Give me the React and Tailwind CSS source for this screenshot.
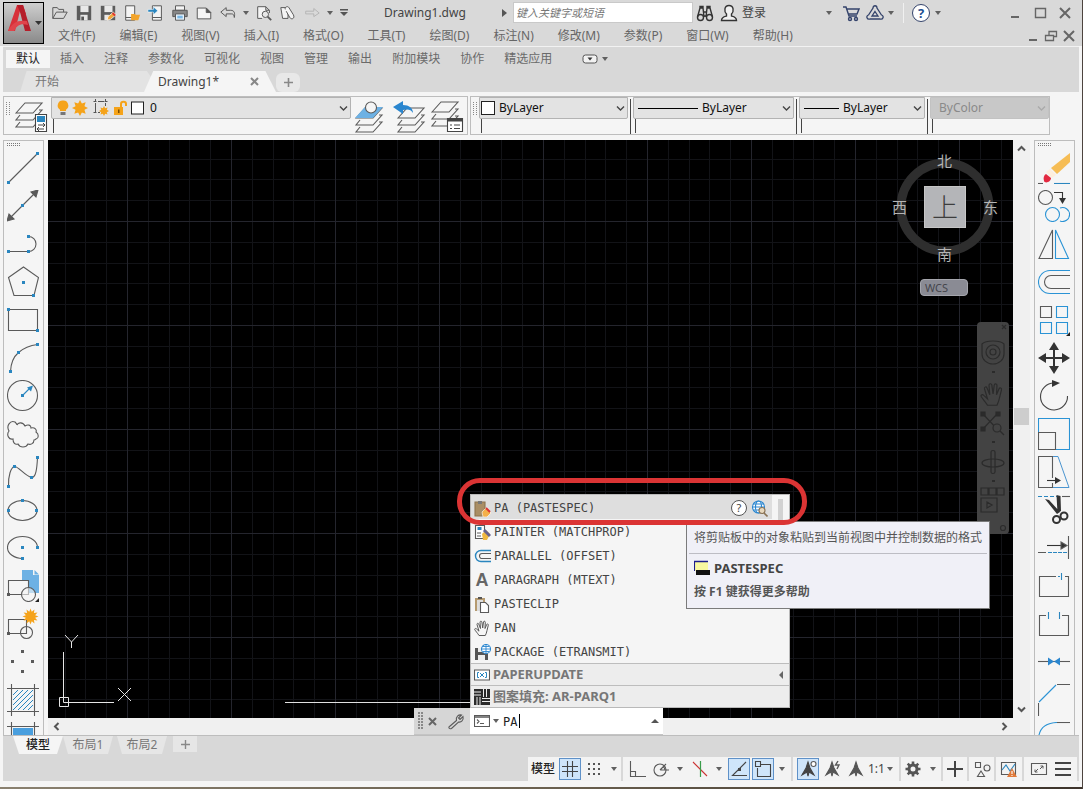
import React from 'react';

const G = '#5a5a5a';
const B = '#2a86bf';

/* ---------- small helpers ---------- */

const Svg = ({ size = 20, box = size, children, className = '' }) => (
  <svg width={size} height={size} viewBox={`0 0 ${box} ${box}`} fill="none" stroke={G} strokeWidth="1.1" className={`shrink-0 ${className}`} aria-hidden="true">
    {children}
  </svg>
);

// little square grip used all over the draw icons
const Dots = ({ at, color = B, s = 3 }) =>
  at.map(([x, y]) => <rect key={`${x}-${y}`} x={x - s / 2} y={y - s / 2} width={s} height={s} fill={color} stroke="none" />);

const Caret = ({ className = '' }) => (
  <svg width="6" height="4" viewBox="0 0 6 4" className={`shrink-0 ${className}`} aria-hidden="true">
    <path d="M0 0h6L3 4z" fill="#606060" />
  </svg>
);

const Chevron = ({ className = '', color = '#555', w = 1.4 }) => (
  <svg width="9" height="9" viewBox="0 0 9 9" className={`shrink-0 ${className}`} fill="none" stroke={color} strokeWidth={w} aria-hidden="true">
    <path d="M1 2.5l3.5 3.5L8 2.5" />
  </svg>
);

const Sun = ({ cx, cy, r, spikes = 8 }) => {
  const pts = Array.from({ length: spikes * 2 }, (_, i) => {
    const a = (i * Math.PI) / spikes;
    const d = i % 2 ? r * 0.6 : r;
    return `${cx + d * Math.cos(a)},${cy + d * Math.sin(a)}`;
  }).join(' ');
  return <polygon points={pts} fill="#f5a31a" stroke="none" />;
};

const handPath =
  'M5 15.5C3.5 13 1.5 11 .8 9.7c-.5-1 .8-1.7 1.7-.8L5 11.200 3 4.5c-.3-1.200 1.300-1.700 1.700-.5L6.5 8.5 6 2.200C6 .9 7.700.8 7.900 2.100L8.700 8 9.5 2c.2-1.200 1.900-1 1.800.3L11 8.5l1.700-4c.5-1.100 2-.5 1.600.7L13 10.5c-.3 2-1 3.5-1.700 5z';

/* ---------- title bar ---------- */

const quickTools = [
  ['打开', <><path d="M2 16V4h5l1.5 2H14v3M2 16L6 9h12l-4 7z" /></>],
  ['保存', <><path d="M2 2h16v16H2z" fill="#5c5c5c" stroke="none" /><path d="M6 2h9v7H6z" fill="#e8e8e8" stroke="none" /><path d="M6 12h8v6H6z" fill="#e8e8e8" stroke="none" /><path d="M7 14h3v4H7z" fill="#555" stroke="none" /></>],
  ['另存为', <><path d="M2 2h16v16H2z" fill="#5c5c5c" stroke="none" /><path d="M6 2h9v7H6z" fill="#e8e8e8" stroke="none" /><path d="M6 12h5v6H6z" fill="#e8e8e8" stroke="none" /><path d="M9 18l1-4 6-5 3 3-6 5z" fill="#f0a73c" stroke="#fff" strokeWidth=".8" /><path d="M15 10l3 3" stroke="#d33" strokeWidth="2" /></>],
  ['从 Web 打开', <><path d="M3 2h10v16H3z" fill="#f4f4f4" /><path d="M3 15h7" /><path d="M9 18v-7h4l1 1h5l-2 6z" fill="#f2a42c" stroke="none" /></>],
  ['保存到 Web', <><path d="M6 2h10v16H6z" fill="#f4f4f4" /><path d="M6 15h10" /><path d="M1 6h6V3l5 4.5L7 12V9H1z" fill={B} stroke="#fff" strokeWidth=".6" /></>],
  ['打印', <><path d="M5 2h10v5H5z" fill="#f4f4f4" /><path d="M2 7h16v7H2z" fill="#888" /><path d="M5 11h10v7H5z" fill="#e6f2fb" /><path d="M7 13h6v3H7z" fill="#7ab8e6" stroke="none" /></>],
  ['新建', <><path d="M2.5 4.500h10l5 5v7h-15z" fill="#f4f4f4" /><path d="M12.5 4.500v5h5z" fill="#555" /></>],
  ['放弃', <path d="M8 4L2 9l6 5v-3h6c2 0 3 1.5 3 4 1-5 0-8-4-8H8z" />],
  ['预览', <><path d="M8 16H3V3h9l4 4v3M12 3v4h4" fill="#f4f4f4" /><circle cx="11.5" cy="11.5" r="3.5" fill="#e8e8e8" /><path d="M14 14l4 4" strokeWidth="2" /></>],
  ['附着', <><path d="M2 4h8v12H4z" fill="#f4f4f4" /><path d="M7 6c-1-3 3-4 4-2l5 8c2 4-2 6-4 3L8 8" fill="#f4f4f4" /></>],
  ['重做', <path d="M12 5l6 5-6 4v-3H3V8h9z" stroke="#b5b5b5" />],
];

const QuickButton = ({ item }) => (
  <button type="button" aria-label={item[0]} className="w-6 h-6 flex items-center justify-center">
    <Svg size={18} box={20}>{item[1]}</Svg>
  </button>
);

const CaretButton = ({ label, className = 'w-3' }) => (
  <button type="button" aria-label={label} className={`h-6 flex items-center justify-center ${className}`}>
    <Caret />
  </button>
);

const TitleBar = () => (
  <div className="flex h-[25px] items-center">
    <div className="flex items-center ml-1">
      {quickTools.slice(0, 8).map((t) => <QuickButton key={t[0]} item={t} />)}
      <CaretButton label="放弃列表" />
      {quickTools.slice(8).map((t) => <QuickButton key={t[0]} item={t} />)}
      <CaretButton label="重做列表" />
      <button type="button" aria-label="自定义快速访问工具栏" className="w-4 h-6 flex items-center justify-center">
        <svg width="8" height="7" viewBox="0 0 8 7" aria-hidden="true"><path d="M0 0h8v1.5H0zM0 3h8L4 7z" fill="#555" /></svg>
      </button>
    </div>
    <h1 className="ml-8 w-[114px] text-xs text-[#444]">Drawing1.dwg</h1>
    <svg width="5" height="8" viewBox="0 0 5 8" className="mr-1.5 ml-1" aria-hidden="true"><path d="M0 0l5 4-5 4z" fill="#555" /></svg>
    <input
      type="text"
      aria-label="搜索"
      placeholder="键入关键字或短语"
      className="w-[180px] h-[21px] bg-white border border-[#c9c9c9] px-0.5 text-[11px] italic placeholder:text-[#777] outline-none"
    />
    <button type="button" aria-label="查找" className="w-6 h-6 flex items-center justify-center">
      <Svg size={18}>
        <g stroke="#333" strokeWidth="1.4"><circle cx="4.5" cy="13.5" r="3" /><circle cx="13.5" cy="13.5" r="3" /><path d="M1.5 13L4 4h3l1 9M16.5 13L14 4h-3l-1 9M8 8h2M8 12h2M4 4V2.5h3V4M11 4V2.5h3V4" /></g>
      </Svg>
    </button>
    <button type="button" className="h-6 flex items-center gap-1 pl-[3px] w-[104px] text-xs text-[#444]">
      <Svg size={18}><path d="M9 1.5c5 0 5 6 2.5 8.5v2c2 .5 5 1 5 4.5h-15C1.5 13 4.5 12.5 6.5 12v-2C4 7.5 4 1.5 9 1.5z" stroke="#333" fill="#f0f0f0" strokeWidth="1.4" /></Svg>
      登录
    </button>
    <CaretButton label="登录选项" className="w-4" />
    <button type="button" aria-label="Autodesk App Store" className="w-6 h-6 ml-0.5 flex items-center justify-center">
      <Svg size={18}><g stroke="#34436b" strokeWidth="1.4"><path d="M1 3h3l3 9h8M5 5h12l-2 5H6.5" /><circle cx="8" cy="15" r="1.5" /><circle cx="14" cy="15" r="1.5" /></g></Svg>
    </button>
    <button type="button" aria-label="连接" className="w-6 h-6 flex items-center justify-center">
      <Svg size={18}><g stroke="#34436b" strokeWidth="1.3"><path d="M7 4c0-3 4-3 4 0l4.5 7c3 1 1.5 5-1.5 4H4c-3 1-4.5-3-1.5-4zM9 7.5l3 4.5H6z" /></g></Svg>
    </button>
    <CaretButton label="连接选项" className="w-2" />
    <span className="w-px h-5 bg-[#f0f0f0] mx-2" />
    <button type="button" aria-label="帮助" className="w-[18px] h-[18px] rounded-full border border-[#34436b] bg-white text-[13px] leading-4 font-bold text-[#1d4f91]">?</button>
    <CaretButton label="帮助选项" className="w-4" />
    <div className="ml-auto flex items-center gap-[7px] mr-2">
      {[
        ['最小化', 'M5 13h8', 2],
        ['最大化', 'M4.5 4.5h10v9h-10z', 1.4],
        ['关闭', 'M4 4l10 10M14 4L4 14', 2],
      ].map(([l, d, w]) => (
        <button key={l} type="button" aria-label={l}><Svg size={18}><path d={d} strokeWidth={w} stroke="#666" /></Svg></button>
      ))}
    </div>
  </div>
);

const menus = ['文件(F)', '编辑(E)', '视图(V)', '插入(I)', '格式(O)', '工具(T)', '绘图(D)', '标注(N)', '修改(M)', '参数(P)', '窗口(W)', '帮助(H)'];

const MenuBar = () => (
  <div className="flex h-[21px] items-center pl-[14px]">
    <nav className="flex gap-6 text-xs leading-4 text-[#666]">
      {menus.map((m) => <button key={m} type="button" className="whitespace-nowrap">{m}</button>)}
    </nav>
    <div className="ml-auto flex items-center mr-1">
      {[
        ['最小化图形', 'M5 13h8', 2],
        ['还原图形', 'M3.5 8.5h8v5h-8zM7 8V4.500h7.500v5H12', 1.3],
        ['关闭图形', 'M4 4l10 10M14 4L4 14', 2],
      ].map(([l, d, w]) => (
        <button key={l} type="button" aria-label={l}><Svg size={18}><path d={d} strokeWidth={w} stroke="#666" /></Svg></button>
      ))}
    </div>
  </div>
);

/* ---------- ribbon + file tabs ---------- */

const ribbon = ['默认', '插入', '注释', '参数化', '可视化', '视图', '管理', '输出', '附加模块', '协作', '精选应用'];

const Ribbon = () => (
  <div className="mx-[3px] bg-[#d8d8d8] border-t border-[#f2f2f2]">
    <div className="flex items-center h-6 pl-[3px] text-xs leading-4">
      {ribbon.map((r, i) => (
        <button key={r} type="button" className={`px-2.5 h-[18px] whitespace-nowrap ${i === 0 ? 'bg-[#f5f5f5] text-[#222]' : 'text-[#6a6a6a]'}`}>{r}</button>
      ))}
      <button type="button" aria-label="最小化功能区" className="ml-5 flex items-center gap-1">
        <svg width="16" height="10" viewBox="0 0 16 10" aria-hidden="true"><rect x="1" y="1" width="14" height="8" rx="2.5" fill="#f2f2f2" stroke="#555" /><path d="M5.5 3.5h5L8 6.5z" fill="#333" /></svg>
        <Caret />
      </button>
    </div>
    <div className="flex items-end h-[21px] pl-[17px] text-xs">
      <button type="button" className="h-[21px] w-[132px] pl-[15px] text-left text-[#777] bg-[#e3e3e3] [clip-path:polygon(5%_0,96%_0,100%_35%,96%_100%,0_100%)]">开始</button>
      <div className="-ml-2 h-[21px] w-[132px] flex items-center bg-[#f5f5f5] [clip-path:polygon(7%_0,92%_0,100%_100%,0_100%)]">
        <button type="button" className="pl-[14px] text-[#444]">Drawing1*</button>
        <button type="button" aria-label="关闭选项卡" className="ml-[31px]"><Svg size={9}><path d="M1 1l7 7M8 1L1 8" stroke="#888" strokeWidth="2" /></Svg></button>
      </div>
      <button type="button" aria-label="新图形" className="h-[19px] w-6 flex items-center justify-center bg-[#e8e8e8] rounded-md"><Svg size={9}><path d="M4.5 0v9M0 4.500h9" stroke="#888" strokeWidth="1.6" /></Svg></button>
    </div>
  </div>
);

/* ---------- layer / properties toolbar ---------- */

const Grip = () => (
  <svg width="4" height="14" viewBox="0 0 4 14" className="mt-[5px] mx-0.5 shrink-0" aria-hidden="true">
    {[0, 2, 4, 6, 8, 10, 12].map((y) => <path key={y} d={`M0 ${y}h1v1H0zM3 ${y}h1v1H3z`} fill="#888" />)}
  </svg>
);

const sheets = (dx, dy) => (
  <g transform={`translate(${dx} ${dy})`}>
    <path d="M1 11L10 1h17l-9 10z" fill="#f5f5f5" />
    <path d="M5 13l-4 5h17l9-10h-3M5 20l-4 5h17l9-10h-3" />
  </g>
);

const Combo = ({ label, value, className, lead, disabled }) => (
  <div className={`flex flex-col ${className}`}>
    <div className={`relative flex items-center h-[22px] border pl-1 rounded-b-xs ${disabled ? 'bg-[#c8c8c8] border-[#c2c2c2]' : 'bg-[#e3e3e3] border-[#b3b3b3]'}`}>
      {lead}
      <select aria-label={label} disabled={disabled} defaultValue={value} className={`appearance-none flex-1 min-w-0 h-5 pl-1 bg-transparent text-xs outline-none ${disabled ? 'text-[#8a8a8a]' : 'text-[#111]'}`}>
        <option>{value}</option>
      </select>
      <Chevron className="absolute right-0.5 pointer-events-none" color={disabled ? '#aaa' : '#444'} />
    </div>
    <div className="ml-0.5 h-[14px] border-l border-[#444]" />
  </div>
);

const Bar = () => <div className="w-px h-[35px] mt-0.5 mx-0.5 bg-[#444] shrink-0" />;

const Toolbars = () => (
  <div className="flex gap-0.5 pl-[3px] mt-1 h-[39px]">
    <div className="flex border border-[#bdbdbd] w-[465px]">
      <Grip />
      <button type="button" aria-label="图层特性" className="ml-[3px] mr-0.5">
        <Svg size={34}>
          {sheets(0, 3)}
          <path d="M20.5 15.5h11v17h-11z" fill="#fff" stroke="#444" /><path d="M22 17h8v6h-8z" fill={B} stroke="none" />
          <path d="M23 26h7m-2-2l2 2-2 2M29 30h-7m2-2l-2 2 2 2" stroke="#444" strokeWidth="1" />
        </Svg>
      </button>
      <Combo
        label="图层"
        value="0"
        className="w-[300px]"
        lead={
          <svg width="90" height="18" viewBox="0 0 90 18" aria-hidden="true">
            <path d="M7 1.5a5 5 0 0 1 3 9.200V12H4v-1.300A5 5 0 0 1 7 1.5z" fill="#f5a31a" /><path d="M4.5 13h5v3h-5z" fill="#777" />
            <Sun cx={24} cy={9} r={8} /><circle cx="24" cy="9" r="4.500" fill="#f5a31a" />
            <g fill="none" stroke="#555"><path d="M39.5 4v9M42 2.500h6M49.5 4v3M42 13.500h2" /><path d="M37.5 2.500h3M48.5 2.500h3M37.5 13.500h3M39.5 0v3M49.5 0v3" /></g>
            <Sun cx={48} cy={12} r={5} />
            <path d="M58 8h9v8h-9z" fill="#f5a31a" /><path d="M65 8V5c0-3 5-3 5 0v2" fill="none" stroke="#f5a31a" strokeWidth="2" /><path d="M62 10.5h1.500V14H62z" fill="#7a4d00" />
            <rect x="75.5" y="3" width="12" height="12" fill="#fff" stroke="#222" />
          </svg>
        }
      />
      <button type="button" aria-label="将对象的图层置为当前" className="ml-0.5">
        <Svg size={34}>{sheets(2, 8)}<path d="M2 19l10-11h18l-10 11z" fill="#6db1e4" stroke="none" /><circle cx="18" cy="8.500" r="5.500" fill="#f5f5f5" /></Svg>
      </button>
      <button type="button" aria-label="上一个图层" className="ml-1.5">
        <Svg size={34}>{sheets(4, 8)}<path d="M0 8l10-6v4c6 0 10 3 10 8-2-4-6-4-10-3v4z" fill="#2a86cf" stroke="none" /></Svg>
      </button>
      <button type="button" aria-label="图层状态管理器" className="ml-1">
        <Svg size={34}>{sheets(0, 2)}<path d="M16.5 19.5h15v13h-15z" fill="#fff" stroke="#444" /><path d="M16.5 21h15" strokeWidth="3" stroke="#444" /><path d="M19 26h2m2 0h6M19 29.500h2m2 0h6" stroke="#444" /></Svg>
      </button>
    </div>
    <div className="flex border border-[#bdbdbd]">
      <Grip />
      <Combo label="颜色" value="ByLayer" className="w-[149px]" lead={<span className="w-[14px] h-[14px] ml-[-3px] bg-white border border-[#222]" />} />
      <Bar />
      <Combo label="线型" value="ByLayer" className="w-[161px]" lead={<span className="w-[60px] h-px bg-black" />} />
      <Bar />
      <Combo label="线宽" value="ByLayer" className="w-[126px]" lead={<span className="w-[35px] h-px bg-black" />} />
      <Bar />
      <Combo label="打印样式" value="ByColor" className="w-[119px]" disabled />
    </div>
  </div>
);

/* ---------- side toolbars, every icon is drawn on a 32px board ---------- */

const drawTools = [
  ['直线', <><path d="M1.5 30.5l29-29" /><Dots at={[[1.5, 30.5], [30.5, 1.5]]} /></>],
  ['构造线', <><path d="M3 28L28 3" /><path d="M0 31l2-7 5 5zM31 0l-7 2 5 5z" fill={G} /><Dots at={[[15.5, 15.5]]} /></>],
  ['多段线', <><path d="M1.5 23.5h20a7.5 7.5 0 0 0 0-15" /><Dots at={[[1.5, 23.5], [21.5, 23.5], [21.5, 8.5]]} /></>],
  ['多边形', <><path d="M16.5 1l15 10.5-4.5 18H7l-5.5-18z" /><Dots at={[[16.5, 16.5], [26.5, 29.5]]} /></>],
  ['矩形', <><path d="M1.5 5.5h29v21h-29z" /><Dots at={[[1.5, 5.5], [30.5, 26.5]]} /></>],
  ['圆弧', <><path d="M3.5 29.5Q4 17 11.5 10.5T30.5 2.500" /><Dots at={[[3.5, 29.5], [11.5, 10.5], [30.5, 2.5]]} /></>],
  ['圆', <><circle cx="15.5" cy="15.5" r="15" /><path d="M15.5 15.5l7-7" stroke={B} /><path d="M26 5.5l-6 2 4 4z" fill={B} stroke="none" /><Dots at={[[15.5, 15.5]]} /></>],
  ['修订云线', <path d="M2 13C-1 8 3 2 8 4c1 1 2 2 2 3 1-3 6-3 8 1 3-2 6-1 6 2 4-1 6 2 5 4 3 2 3 6 0 7-1 1-1 1-2 1 0 4-4 5-6 4-2 4-8 4-10 0-3 1-5-1-5-5-4 1-7-4-4-8z" />],
  ['样条曲线', <><path d="M1.5 30.5C1 20 4 11 7.5 10.5S18 20 24.5 21.500C29 22 30 12 30.5 1.500" /><Dots at={[[1.5, 30.5], [7.5, 10.5], [24.5, 21.5], [30.5, 1.5]]} /></>],
  ['椭圆', <><ellipse cx="15.5" cy="16.5" rx="14.5" ry="10" /><Dots at={[[1.5, 16.5], [15.5, 6.5], [29.5, 16.5]]} /></>],
  ['椭圆弧', <><path d="M30.5 15.5A15 11 0 1 0 15.5 26.500" /><Dots at={[[15.5, 15.5], [30.5, 15.5], [15.5, 26.5]]} /></>],
  ['插入块', <><path d="M15 0h11v5h6v18H15z" fill="#6db1e4" stroke="none" /><path d="M27.5 0L32 4.500h-4.500z" fill="#6db1e4" stroke="none" /><path d="M1.5 10.5h20v14h-20z" fill="#f5f5f5" /><circle cx="21.5" cy="24.5" r="7" fill="#f5f5f5" fillOpacity=".6" /><Dots at={[[1.5, 24.5]]} color={G} /><path d="M32 28v4h-4z" fill="#222" stroke="none" /></>],
  ['创建块', <><path d="M1.5 11.5h18v14h-18z" /><circle cx="19.5" cy="24.5" r="6" /><Sun cx={23.5} cy={8.5} r={8} spikes={12} /><Dots at={[[1.5, 25.5]]} color={G} /></>],
  ['多点', <Dots at={[[15.5, 5.5], [5.5, 15.5], [25.5, 15.5], [15.5, 25.5]]} color={G} />],
  ['图案填充', <><path d="M4.5 0v32M27.5 0v32M0 4.500h32M0 27.500h32" /><path d="M6 11l5-5M6 16L16 6M6 21L21 6M6 26L26 6M11 26l15-15M16 26l10-10M21 26l5-5" stroke={B} strokeWidth="1" /></>],
  ['渐变色', <><path d="M4.5 0v32M27.5 0v32M0 4.500h32" /><path d="M6 6h20v26H6z" fill="#4a9fde" stroke="none" /></>],
];

const modifyTools = [
  ['删除', <><path d="M32 1v9L19 22l-6-6z" fill="#f6bd55" stroke="none" /><path d="M12 17l6 6-4 3-6-6z" fill="#fdeedd" stroke="none" /><path d="M8 22l5 4c0 4-6 6-7 3-1-3 0-6 2-7z" fill="#e32940" stroke="none" /><path d="M0 31.500h5" /><path d="M16 31.500h16" stroke={B} /></>],
  ['复制', <><circle cx="7.5" cy="7.5" r="7" /><path d="M16 2.5h8.500V9" stroke="#333" /><path d="M21 8h7l-3.500 6z" fill="#333" stroke="none" /><circle cx="14.5" cy="24.5" r="7" stroke="#2a93d5" /><path d="M22 18a7 7 0 1 1 0 13" stroke="#2a93d5" /></>],
  ['镜像', <><path d="M14.5 2v28.500H1z" /><path d="M17.5 2v28.500h13z" stroke="#2a93d5" /></>],
  ['偏移', <><path d="M32 4.5H12a11.5 11.5 0 0 0 0 23h20" stroke="#2a93d5" /><path d="M32 9.5H13a6.5 6.5 0 0 0 0 13h19" /></>],
  ['阵列', <><path d="M2.5 2.5h11v11h-11z" /><path d="M18.5 2.5h11v11h-11zM2.5 18.5h11v11h-11zM18.5 18.5h11v11h-11z" stroke="#2a93d5" /><path d="M32 28v4h-4z" fill="#222" stroke="none" /></>],
  ['移动', <><path d="M16 4v24M4 16h24" stroke="#333" strokeWidth="2" /><path d="M16 0l5 8H11zM16 32l5-8H11zM0 16l8-5v10zM32 16l-8-5v10z" fill="#333" stroke="none" /></>],
  ['旋转', <><path d="M16 3A13.5 13.5 0 1 0 29.5 16" stroke="#444" /><path d="M14 0l8 3-8 4z" fill="#333" stroke="none" /></>],
  ['缩放', <><path d="M.5 14V.5h31v31H18" stroke="#2a93d5" /><path d="M.5 14.5h17v17H.5z" /></>],
  ['拉伸', <><path d="M14.5 22V.5H.5v31h14V27" /><path d="M15 .5h5l11 31H15" stroke="#4a94cf" strokeWidth="1" /><path d="M9 24.500h9" stroke="#333" /><path d="M17 21l6 3.500-6 3.500z" fill="#333" stroke="none" /></>],
  ['修剪', <><path d="M0 2.500h20" stroke={B} strokeDasharray="4 2" /><path d="M24 2.500h8" /><path d="M18.500 1l4 1 .5 15-3.500 2zM7 5l4 1 11 12-3 2z" fill="#333" stroke="none" /><circle cx="18.500" cy="25.500" r="3.500" stroke="#333" strokeWidth="2" /><circle cx="26" cy="22" r="3.500" stroke="#333" strokeWidth="2" /></>],
  ['延伸', <><path d="M9 13.500h16" stroke="#333" /><path d="M23 10l6 3.500-6 3.500z" fill="#333" /><path d="M30.5 4v23M0 20.500h8" /><path d="M10 20.500h20" stroke={B} strokeDasharray="4 1" /></>],
  ['打断于点', <><path d="M18 6.5H1.5v20h29v-20H27" /><path d="M23.5 3v7M20 6.500h2" stroke={B} /></>],
  ['打断', <><path d="M8 7.5H1.5v20h29v-20H24" /><path d="M10.5 4v7M21.5 4v7" stroke={B} /></>],
  ['合并', <><path d="M0 15.500h32" /><path d="M10 11.5l6 4-6 4zM22 11.5l-6 4 6 4z" fill="#2a86cf" stroke="none" /></>],
  ['倒角', <><path d="M.5 32V19M19 .5h13" /><path d="M1 18L18 1" stroke="#2a93d5" /></>],
  ['圆角', <><path d="M19 .5h13" /><path d="M.5 16Q2 1 19 .5" stroke="#2a93d5" /></>],
];

const SideBar = ({ tools, label }) => (
  <div role="toolbar" aria-label={label} className="w-[41px] shrink-0 border-x border-t border-[#bdbdbd] bg-[#f5f5f5] overflow-hidden pl-[3px]">
    <svg width="14" height="4" viewBox="0 0 14 4" className="mt-0.5 mb-0.5" aria-hidden="true">
      {[0, 2, 4, 6, 8, 10, 12].map((x) => <path key={x} d={`M${x} 0h1v1h-1zM${x} 2h1v1h-1z`} fill="#777" />)}
    </svg>
    <div className="h-full overflow-hidden">
      {tools.map(([name, icon]) => (
        <button key={name} type="button" aria-label={name} className="h-[38px] flex items-center">
          <Svg size={32}>{icon}</Svg>
        </button>
      ))}
    </div>
  </div>
);

/* ---------- drawing area ---------- */

const minor = [21, 42, 62, 83];

const Canvas = () => (
  <div className="relative flex-1 min-w-0 bg-black overflow-hidden">
    <svg className="absolute inset-0 w-full h-full" aria-hidden="true">
      <defs>
        <pattern id="grid" x="79" y="81" width="104" height="104" patternUnits="userSpaceOnUse">
          {minor.map((m) => <path key={m} d={`M${m} 0h1v104h-1zM0 ${m}h104v1H0z`} fill="#121317" />)}
          <path d="M0 0h1v104H0zM0 0h104v1H0z" fill="#24252d" />
        </pattern>
      </defs>
      <rect width="100%" height="100%" fill="url(#grid)" />
      <path d="M237 562.500h190" stroke="#e0e0e0" />
    </svg>

    {/* UCS icon */}
    <svg width="80" height="80" viewBox="0 0 80 80" className="absolute left-2.5 bottom-1.5" fill="none" stroke="#e6e6e6" aria-hidden="true">
      <path d="M5.5 20v50.500H56" /><path d="M1.5 65.5h9v9h-9z" />
      <path d="M7 3l6.500 7L20 3M13.500 10v6M60 56l13 13M73 56L60 69" />
    </svg>

    {/* view cube */}
    <div className="absolute right-[13px] top-3 w-[110px] h-[110px] grid place-items-center text-[15px] leading-none text-[#b4b4b4]">
      <svg width="98" height="98" viewBox="0 0 98 98" className="absolute left-[6px] top-[6px]" aria-hidden="true">
        <circle cx="49" cy="49" r="44" fill="none" stroke="#2e2e2e" strokeWidth="9" />
      </svg>
      <button type="button" className="absolute left-[47px] top-[2px]">北</button>
      <button type="button" className="absolute left-[2px] top-[48px]">西</button>
      <button type="button" className="absolute right-[2px] top-[48px]">东</button>
      <button type="button" className="absolute left-[47px] bottom-0">南</button>
      <button type="button" className="relative w-[42px] h-[42px] bg-[#b4b5b8] border border-[#c6c6c6] font-light text-[26px] leading-none text-[#3d3d3d]">上</button>
    </div>
    <button type="button" className="absolute right-[45px] top-[139px] w-12 h-[17px] rounded-sm border border-[#a5a6ad] bg-[#8a8b94] pl-1 text-left text-[11px] leading-[14px] text-[#44454c]">
      WCS
    </button>

    {/* navigation bar */}
    <div className="absolute right-1 top-[182px] w-8 h-[212px] rounded-sm bg-[#434343]">
      <svg width="32" height="212" viewBox="0 0 32 212" fill="none" stroke="#2b2b2b" strokeWidth="1.2" aria-hidden="true">
        <path d="M25 3l4 4M29 3l-4 4" />
        <path d="M5 22c4-4 18-4 22 0v10a11 10 0 0 1-22 0z" /><circle cx="16" cy="30" r="7" /><circle cx="16" cy="30" r="3" />
        <g transform="translate(3 60) scale(1.5)"><path d={handPath} strokeWidth=".8" /></g>
        <path d="M5 91l16 17M21 91L5 108" /><path d="M4 90h4v4H4zM19 90h4v4h-4zM4 105h4v4H4z" fill="#2b2b2b" /><circle cx="20" cy="106" r="4" fill="#434343" /><path d="M23 109l4 4" />
        <ellipse cx="16" cy="141" rx="11" ry="4" /><path d="M14 130v20c0 2 4 2 4 0v-20c0-2-4-2-4 0z" />
        <path d="M4 166h7v7H4zM12 166h7v7h-7zM20 166h7v7h-7zM4 176h16v14H4zM10 180l5 3-5 3z" />
        <path d="M15 50h3M15 120h3M15 159h3" strokeWidth="2" />
        <circle cx="26" cy="206" r="2.5" />
      </svg>
    </div>
  </div>
);

/* ---------- command line ---------- */

const suggestions = [
  ['PA (PASTESPEC)', <><path d="M1 2h10v14H1z" fill="#a98e65" stroke="#8d744f" /><path d="M4 1h4v3H4z" fill="#777" stroke="none" /><path d="M8 12l4-4 5 5-4 4H9z" fill="#f4b04a" stroke="#fff" strokeWidth=".6" /><path d="M12 8l4 4" stroke="#d33" strokeWidth="2" /></>],
  ['PAINTER (MATCHPROP)', <><path d="M1.5 1.5h9v13h-9z" fill="#fff" /><path d="M3.5 3h4v3h-4z" fill={B} stroke="none" /><path d="M3 9h4M3 12h4" /><path d="M8 10l4-4 4 4-3 6H9z" fill="#f0b840" stroke="none" /><path d="M10 6l6 6" stroke="#67628f" strokeWidth="3" /></>],
  ['PARALLEL (OFFSET)', <><path d="M17 2.5H7a5.5 5.5 0 0 0 0 11h10" stroke="#2a86bf" strokeWidth="1.4" /><path d="M17 5.5H8a2.5 2.5 0 0 0 0 5h9" /></>],
  ['PARAGRAPH (MTEXT)', null],
  ['PASTECLIP', <><path d="M1 2h10v13H1z" fill="#b59a70" stroke="none" /><path d="M3 4h6v11H3z" fill="#ddd" stroke="none" /><path d="M4 1h4v2H4z" fill="#555" stroke="none" /><path d="M6.5 6.5h5l3 3v7h-8z" fill="#fff" /></>],
  ['PAN', <path d={handPath} strokeWidth="1" />],
  ['PACKAGE (ETRANSMIT)', <><path d="M1 4h13v12H1z" fill="#555" stroke="none" /><path d="M4 4h5v4H4zM4 11h7v5H4z" fill="#eee" stroke="none" /><circle cx="12" cy="5" r="4.5" fill="#fff" stroke="#2a86cf" /><path d="M12 .5v9M7.5 5h9M9 2.500h6M9 7.500h6" stroke="#2a86cf" strokeWidth=".9" /></>],
];

const SuggestionList = () => (
  <div className="relative ml-14 w-80 border border-[#b9b9b9] bg-[#f5f5f5]">
    <ul className="font-['DejaVu_Sans_Mono',monospace] text-xs text-[#444]">
      {suggestions.map(([name, icon], i) => (
        <li key={name} className={`flex items-center h-6 pl-0.5 pt-0.5 ${i === 0 ? 'bg-[#dedede] mr-[17px]' : ''}`}>
          <span className="w-[18px] mr-[3px] flex justify-center">
            {icon ? <Svg size={17}>{icon}</Svg> : <span className="font-['Liberation_Sans',sans-serif] text-lg leading-5 text-[#666] font-bold">A</span>}
          </span>
          <button type="button" className="whitespace-nowrap">{name}</button>
          {i === 0 && (
            <span className="ml-auto mr-1 flex items-center gap-1">
              <button type="button" aria-label="在帮助中搜索" className="w-4 h-4 rounded-full border border-[#555] bg-white font-['Noto_Sans',sans-serif] text-[11px] leading-[14px]">?</button>
              <button type="button" aria-label="在 Internet 上搜索">
                <Svg size={17}><g stroke="#2a86cf" strokeWidth="1.1"><circle cx="7.5" cy="7" r="6" fill="#fff" /><ellipse cx="7.5" cy="7" rx="3" ry="6" /><path d="M1.5 7h12M2.5 4h10M2.5 10h10" /></g><circle cx="11" cy="10.5" r="3" fill="#e8d8bd" stroke="#8a7355" /><path d="M13 13l3.5 3.500" stroke="#8a7355" strokeWidth="1.6" /></Svg>
              </button>
            </span>
          )}
        </li>
      ))}
    </ul>
    <div className="absolute right-1.5 top-1 w-[5px] h-[21px] bg-[#d2d2d2]" />
    <button type="button" className="flex items-center w-full h-[22px] pl-[3px] pr-1.5 border-t border-[#bdbdbd] bg-[#ededed] text-[13px] font-bold text-[#777]">
      <Svg size={16} className="mr-[3px]"><path d="M.5 3h15v10H.5z" fill="#fff" /><path d="M5 5.500H3.500v5H5M11 5.500h1.500v5H11M6 10l4-4M6 6l4 4" stroke={B} strokeWidth="1" /></Svg>
      PAPERUPDATE
      <svg width="4" height="8" viewBox="0 0 4 8" className="ml-auto" aria-hidden="true"><path d="M4 0v8L0 4z" fill="#666" /></svg>
    </button>
    <button type="button" className="flex items-center w-full h-[22px] pl-[3px] border-t border-[#bdbdbd] bg-[#ededed] text-[13px] font-bold text-[#777]">
      <Svg size={16} className="mr-[3px]"><path d="M0 0h16v16H0z" fill="#2b2b2b" stroke="none" /><path d="M0 3h7M0 6h7M9.5 0v8M12.5 0v8M8 9.500h8M8 12.500h8M3 8v8M6 8v8" stroke="#eee" strokeWidth="1" /></Svg>
      图案填充: AR-PARQ1
    </button>

    {/* command tooltip */}
    <div role="tooltip" className="absolute left-[215px] top-[26px] w-[304px] h-[88px] border border-[#7b7b7b] bg-[#f0f0f7] text-xs leading-4 text-[#555]">
      <p className="h-8 mx-0.5 pl-[5px] pt-2 border-b border-[#bdbdc4] whitespace-nowrap">将剪贴板中的对象粘贴到当前视图中并控制数据的格式</p>
      <p className="flex items-center gap-1 mt-1.5 pl-[7px] text-[13px] font-bold text-[#444]">
        <Svg size={16}><path d="M0 1h14v10H0z" fill="#f7f7a0" stroke="none" /><path d="M0 1.500h14" stroke="#1c1c8c" strokeWidth="1.5" /><path d="M.5 1v10" stroke="#1c1c8c" /><path d="M2 10h14v5H2z" fill="#111" stroke="none" /></Svg>
        PASTESPEC
      </p>
      <p className="mt-2 pl-[7px] font-bold">按 F1 键获得更多帮助</p>
    </div>

    {/* highlight ring */}
    <div className="absolute -left-[14px] -top-[17px] w-[350px] h-[47px] rounded-[23px] border-[5px] border-[#db3434] pointer-events-none" />
  </div>
);

const CommandLine = () => (
  <div className="absolute left-[366px] bottom-0 flex flex-col">
    <SuggestionList />
    <div className="flex h-[27px] w-[249px] border-b border-[#c4c4c4]">
      <div className="w-14 flex items-center bg-[#d6d6d6] pl-1">
        <svg width="5" height="18" viewBox="0 0 5 18" aria-hidden="true">
          {[0, 3, 6, 9, 12, 15].map((y) => <path key={y} d={`M0 ${y}h2v2H0zM3 ${y}h2v2H3z`} fill="#888" />)}
        </svg>
        <button type="button" aria-label="关闭命令行" className="ml-[5px]"><Svg size={9}><path d="M1 1l7 7M8 1L1 8" strokeWidth="2" stroke="#666" /></Svg></button>
        <button type="button" aria-label="自定义" className="ml-[11px]">
          <Svg size={17}><path d="M1.5 13.5l7-6c-1-4 2-6 5-5.500l-3 3 1.500 1.500L15 3.500c1 4-2 6-4.500 5.500l-7 6.500c-2 1-3.500-1-2-2z" /></Svg>
        </button>
      </div>
      <label className="flex flex-1 items-center bg-white pl-1 pr-1">
        <Svg size={16}><path d="M.5 2.5h15v11H.5z" /><path d="M.5 4h15" strokeWidth="1.5" /><path d="M3 6.5l2 2-2 2M6 10.500h4" /></Svg>
        <Caret className="ml-[3px] mr-1" />
        <input type="text" aria-label="命令" defaultValue="PA" size={2} className="w-4 pt-0.5 bg-transparent font-['DejaVu_Sans_Mono',monospace] text-xs text-[#222] outline-none" />
        <span className="w-px h-[14px] bg-black" />
        <svg width="8" height="4" viewBox="0 0 8 4" className="ml-auto" aria-hidden="true"><path d="M0 4l4-4 4 4z" fill="#555" /></svg>
      </label>
    </div>
  </div>
);

const Workspace = () => (
  <div className="flex flex-1 min-h-0 gap-1 mt-1 pt-px pl-[3px] pr-[7px]">
    <SideBar tools={drawTools} label="绘图" />
    <div className="relative flex flex-col flex-1 min-w-0">
      <div className="flex flex-1 min-h-0">
        <Canvas />
        <div className="flex flex-col items-center justify-between w-[17px] py-1 bg-[#f0f0f0]">
          <Chevron className="rotate-180" w={2} />
          <div className="w-[15px] h-[17px] mb-[26px] bg-[#cdcdcd]" />
          <Chevron w={2} />
        </div>
      </div>
      <div className="flex items-center justify-between h-[17px] pl-1 pr-[21px] bg-[#f0f0f0]">
        <Chevron className="rotate-90" w={2} />
        <Chevron className="-rotate-90" w={2} />
      </div>
      <CommandLine />
    </div>
    <SideBar tools={modifyTools} label="修改" />
  </div>
);

/* ---------- bottom ---------- */

const LayoutTabs = () => (
  <div className="flex h-[21px] items-start pl-2.5 text-xs leading-[18px] text-[#777]">
    <button type="button" className="h-[18px] w-[50px] bg-[#f5f5f5] font-medium text-[#222] [clip-path:polygon(0_0,100%_0,88%_100%,12%_100%)]">模型</button>
    <button type="button" className="h-[18px] w-[50px] bg-[#e6e6e6] [clip-path:polygon(0_0,100%_0,90%_100%,10%_100%)]">布局1</button>
    <button type="button" className="h-[18px] w-[50px] ml-1 bg-[#e6e6e6] [clip-path:polygon(0_0,100%_0,90%_100%,10%_100%)]">布局2</button>
    <button type="button" aria-label="新建布局" className="h-4 w-6 ml-1.5 flex items-center justify-center bg-[#e6e6e6]"><Svg size={9}><path d="M4.5 0v9M0 4.500h9" stroke="#888" strokeWidth="1.4" /></Svg></button>
  </div>
);

const StatusButton = ({ label, active, children }) => (
  <button type="button" aria-label={label} aria-pressed={!!active} className={`w-[22px] h-[22px] mx-px flex items-center justify-center ${active ? 'bg-[#cfe5fa] border border-[#5f91c8]' : ''}`}>
    <Svg size={18}>{children}</Svg>
  </button>
);

const figure = 'M9 2l2 6 4 7-5-3-1 4-1-4-5 3 4-7z';
const cell = 'flex items-center justify-center h-6 bg-[#f3f3f3]';

const StatusBar = () => (
  <div className="flex justify-end gap-0.5 h-6 pr-0.5 text-xs text-[#444]">
    <div className={`${cell} w-[93px]`}>
      <button type="button" className="w-[30px] font-medium text-[#222]">模型</button>
      <StatusButton label="栅格" active><path d="M6.5 1v16M11.5 1v16M1 6.5h16M1 11.500h16" stroke="#444" /></StatusButton>
      <StatusButton label="捕捉"><Dots s={2} color="#555" at={[[4, 4], [9, 4], [14, 4], [4, 9], [9, 9], [14, 9], [4, 14], [9, 14], [14, 14]]} /></StatusButton>
      <CaretButton label="捕捉选项" className="w-[15px]" />
    </div>
    <div className={`${cell} w-[168px]`}>
      <StatusButton label="正交"><path d="M2.5 1v15.500H18M2.5 11.500h5v5" /></StatusButton>
      <StatusButton label="极轴"><circle cx="8" cy="10" r="6" /><path d="M8 10h9M8 10l6-6M13 10a5 5 0 0 0-2-3.500" /></StatusButton>
      <CaretButton label="极轴选项" className="w-[15px]" />
      <StatusButton label="等轴测"><path d="M2 2l14 14" stroke="#c33" /><path d="M9.5 1v16" stroke="#3a9c4a" strokeWidth="1.2" /></StatusButton>
      <CaretButton label="等轴测选项" className="w-[15px]" />
      <StatusButton label="对象捕捉追踪" active><path d="M16 2L2.5 15.500H17" stroke="#444" /><path d="M8 8h3v3H8z" fill="#444" stroke="none" /></StatusButton>
      <StatusButton label="对象捕捉" active><path d="M7 4.5h9.500v12h-13V8M1.500 1.500h5v5h-5z" stroke="#444" /></StatusButton>
      <CaretButton label="对象捕捉选项" className="w-[15px]" />
    </div>
    <div className={`${cell} w-[106px]`}>
      <StatusButton label="注释可见性" active><path d={figure} fill="#444" stroke="#444" /><circle cx="14.5" cy="4" r="2.5" fill="#fff" /></StatusButton>
      <StatusButton label="自动缩放"><path d={figure} fill="#555" stroke="#555" /><path d="M15 1l-2.500 4H16l-2 4" strokeWidth="1.4" /></StatusButton>
      <StatusButton label="注释比例图标"><path d={figure} fill="#555" stroke="#555" /></StatusButton>
      <button type="button" className="w-4">1:1</button>
      <CaretButton label="注释比例" />
    </div>
    <div className={`${cell} w-10`}>
      <StatusButton label="切换工作空间">
        <circle cx="9" cy="9" r="4" stroke="#555" strokeWidth="3" />
        <path d="M9 1.500v3M9 13.500v3M1.500 9h3M13.500 9h3M3.700 3.700l2 2M12.300 12.300l2 2M14.300 3.700l-2 2M5.700 12.300l-2 2" stroke="#555" strokeWidth="2.6" />
      </StatusButton>
      <CaretButton label="工作空间选项" className="w-4" />
    </div>
    <div className={`${cell} w-6`}><StatusButton label="注释监视器"><path d="M9 1v16M1 9h16" stroke="#444" strokeWidth="2" /></StatusButton></div>
    <div className={`${cell} w-[25px]`}><StatusButton label="隔离对象"><path d="M2.5 2.5h5v5h-5zM8 11l3.500 5.500h-7z" /><circle cx="14" cy="8" r="3" /></StatusButton></div>
    <div className={`${cell} w-[26px]`}><StatusButton label="图形性能"><path d="M1.5 2.5h14v12h-14z" /><path d="M2 10l4-5 4 6 5-7" stroke={B} /><path d="M12 8l5 9H7z" fill="#e07b3c" stroke="none" /><path d="M12 11v3M12 15v1" stroke="#fff" /></StatusButton></div>
    <div className={`${cell} w-[53px]`}>
      <StatusButton label="全屏显示"><path d="M1.5 3.5h15v11h-15z" /><path d="M5 12l3-3M5 9.500V12h2.500M13 6l-3 3M13 8.500V6h-2.500" strokeWidth="1" /></StatusButton>
      <StatusButton label="自定义"><path d="M1 3h16M1 9h16M1 15h16" stroke="#444" strokeWidth="2" /></StatusButton>
    </div>
  </div>
);

export default function App() {
  return (
    <div className="h-screen min-h-[480px] flex flex-col overflow-hidden bg-[#f5f5f5] border-r border-[#4d443f] font-['Noto_Sans','Noto_Sans_CJK_SC',sans-serif]">
      <header className="flex bg-[#d9d9d9] pl-[3px]">
        <button type="button" aria-label="应用程序菜单" className="mt-0.5 w-[41px] h-[42px] shrink-0 flex items-start border border-black bg-linear-to-b from-[#cfcfcf] to-[#8a8a8a]">
          <svg width="39" height="32" viewBox="0 0 39 32" aria-hidden="true">
            <path d="M4 28L13 2h6l3 9-4 2-2-5-5 20z" fill="#d8313a" />
            <path d="M13 2h6l8 26h-6l-5-19z" fill="#b51e2a" />
            <path d="M4 28c4-8 9-11 19-10l1 4c-7-2-11 0-14 6z" fill="#e0444b" />
            <path d="M31 18h7l-3.500 4z" fill="#333" />
          </svg>
        </button>
        <div className="flex-1 min-w-0">
          <TitleBar />
          <MenuBar />
        </div>
      </header>
      <Ribbon />
      <Toolbars />
      <Workspace />
      <footer className="mx-[3px] mb-1.5 bg-[#d8d8d8] border-t border-[#bdbdbd]">
        <LayoutTabs />
        <StatusBar />
      </footer>
      <div className="h-0.5 shrink-0 bg-linear-to-r from-[#8a8170] via-[#6b6150] to-[#3d342c]" />
    </div>
  );
}
